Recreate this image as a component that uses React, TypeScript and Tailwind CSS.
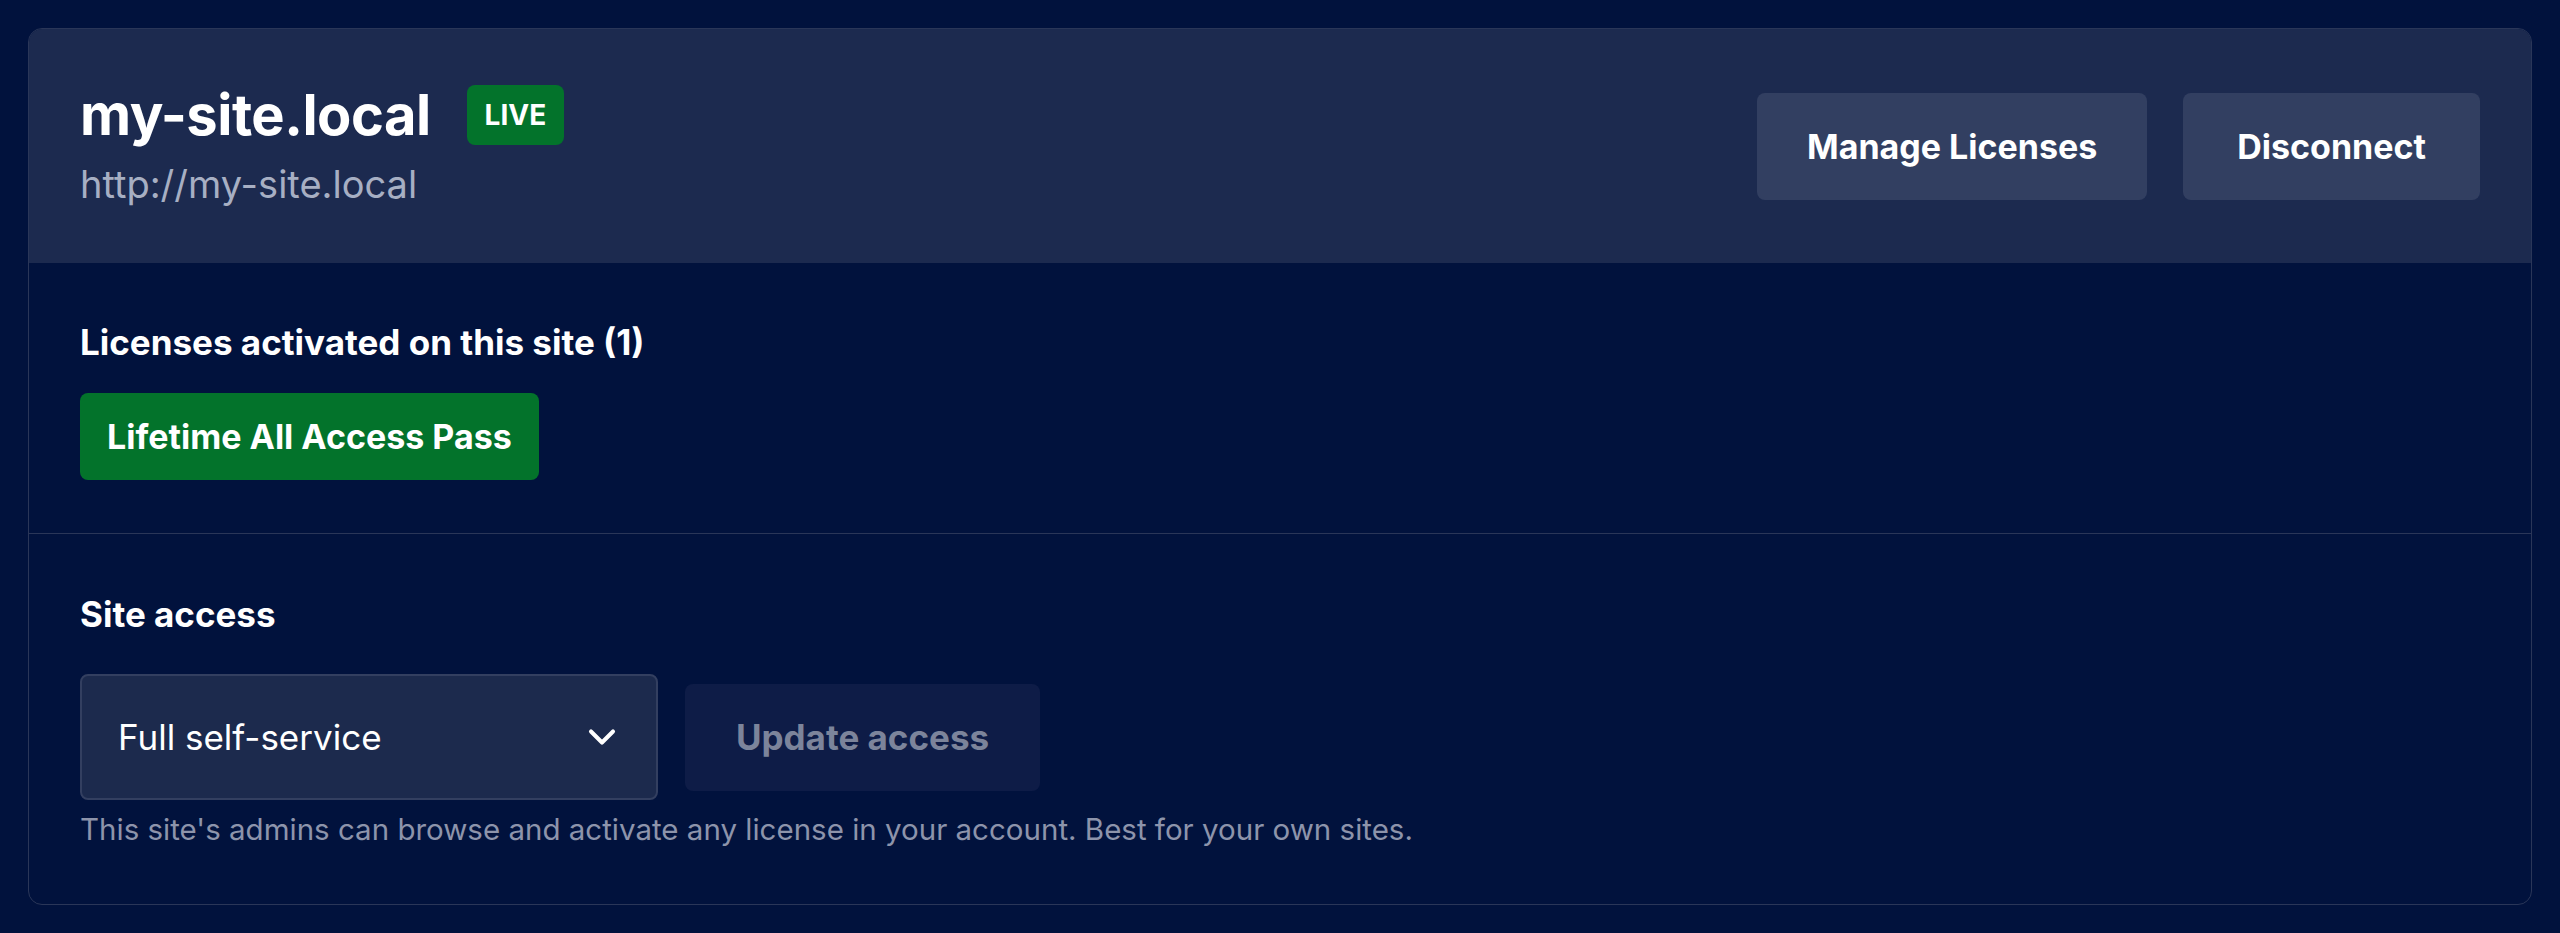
import { ChevronDown } from 'lucide-react'

export default function App() {
  return (
    <main
      className="min-h-screen bg-[#01123d] p-[28px] text-white"
      style={{ fontFamily: 'Inter, "Noto Sans", sans-serif' }}
    >
      <div className="border border-[#2a3658] rounded-[14px] overflow-hidden">
        <header className="bg-[#1c2a4f] px-[51px] py-[56px] flex items-center justify-between">
          <div className="flex flex-col">
            <div className="flex items-center gap-[36px]">
              <h1 className="text-[56px] leading-[56px] font-bold tracking-[-0.5px]">my-site.local</h1>
              <span className="bg-[#03732b] rounded-[8px] h-[60px] px-[18px] flex items-center text-[28px] font-bold">
                LIVE
              </span>
            </div>
            <span className="mt-[16px] text-[38px] leading-[46px] text-[#a7afc3]">http://my-site.local</span>
          </div>

          <div className="flex items-center gap-[36px]">
            <button className="h-[107px] px-[50px] rounded-[8px] bg-[#323f61] text-[34px] font-bold">
              Manage Licenses
            </button>
            <button className="h-[107px] px-[54px] rounded-[8px] bg-[#323f61] text-[34px] font-bold">
              Disconnect
            </button>
          </div>
        </header>

        <section className="px-[51px] pt-[59px] pb-[53px] flex flex-col items-start gap-[31px]">
          <h2 className="text-[35px] leading-[40px] font-bold">Licenses activated on this site (1)</h2>
          <span className="bg-[#03732b] rounded-[8px] h-[87px] px-[27px] flex items-center text-[34px] font-bold">
            Lifetime All Access Pass
          </span>
        </section>

        <div className="h-px bg-[#2a3658]" />

        <section className="px-[51px] pt-[60px] pb-[56px] flex flex-col items-start">
          <h2 className="text-[35px] leading-[40px] font-bold">Site access</h2>
          <div className="mt-[40px] flex items-center gap-[27px]">
            <div className="w-[578px] h-[126px] bg-[#1c2a4d] border-2 border-[#333f60] rounded-[8px] pl-[36px] pr-[32px] flex items-center justify-between">
              <span className="text-[35px]">Full self-service</span>
              <ChevronDown size={44} strokeWidth={2.2} className="text-white" />
            </div>
            <button className="w-[355px] h-[107px] rounded-[8px] bg-[#0e1c47] text-[35px] font-bold text-[#7c849b]">
              Update access
            </button>
          </div>
          <p className="mt-[10px] text-[29.5px] leading-[38px] text-[#8d94ab]">
            This site's admins can browse and activate any license in your account. Best for your own sites.
          </p>
        </section>
      </div>
    </main>
  )
}
